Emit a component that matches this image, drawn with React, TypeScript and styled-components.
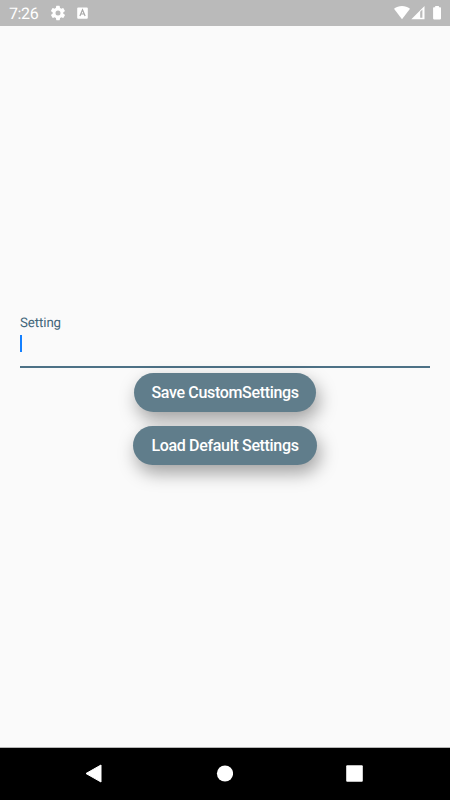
import React from "react";
import styled, { createGlobalStyle } from "styled-components";

const GlobalStyle = createGlobalStyle`
  * { box-sizing: border-box; }
  body { margin: 0; background: #fafafa; }
`;

const Screen = styled.div`
  display: flex;
  flex-direction: column;
  width: 450px;
  height: 800px;
  overflow: hidden;
  background: #fafafa;
  font-family: Roboto, sans-serif;
  text-rendering: geometricPrecision;
`;

const StatusBar = styled.header`
  display: flex;
  align-items: center;
  justify-content: space-between;
  flex: none;
  height: 26px;
  padding: 0 8px 0 9px;
  background: #bababa;
  color: #fff;
`;

const StatusGroup = styled.div`
  display: flex;
  align-items: center;
`;

const Clock = styled.span`
  width: 41px;
  padding-top: 2px;
  font-size: 16px;
  line-height: 20px;
  letter-spacing: -0.4px;
  white-space: nowrap;
`;

const Icon = styled.svg`
  display: block;
  flex: none;
`;

const Content = styled.main`
  display: flex;
  flex: 1;
  flex-direction: column;
  align-items: center;
  padding: 289px 20px 0;
`;

const Field = styled.label`
  display: flex;
  flex-direction: column;
  width: 100%;
  height: 52.5px;
  border-bottom: 2px solid #4d7186;
`;

const FieldLabel = styled.span`
  height: 19px;
  font-size: 13.3px;
  line-height: 17px;
  letter-spacing: -0.1px;
  color: #43677a;
`;

const Caret = styled.span`
  width: 2px;
  height: 17px;
  margin-top: 1px;
  background: #1480ff;
`;

const Actions = styled.div`
  display: flex;
  flex-direction: column;
  align-items: center;
  gap: 13.5px;
  padding-top: 5.7px;
`;

const PillButton = styled.button<{ $width: number }>`
  width: ${({ $width }) => $width}px;
  height: 39.3px;
  padding: 0;
  border: 0;
  border-radius: 20px;
  background: #607d8b;
  box-shadow: 3px 8px 18px rgba(0, 0, 0, 0.36);
  color: #fff;
  font-family: inherit;
  font-size: 16px;
  font-weight: 500;
  line-height: 20px;
  letter-spacing: -0.33px;
  white-space: nowrap;
`;

const NavBar = styled.nav`
  display: flex;
  align-items: center;
  justify-content: space-between;
  flex: none;
  height: 53px;
  padding: 0 87px 1px 85px;
  border-top: 1px solid #b5b5b5;
  background: #000;
`;

export default function App() {
  return (
    <>
      <GlobalStyle />
      <Screen>
        <StatusBar>
          <StatusGroup>
            <Clock>7:26</Clock>
            <Icon width="16" height="16" viewBox="0.8 0.8 22.4 22.4" fill="#fff">
              <path d="M19.4 13a7.5 7.5 0 0 0 0-2l2.1-1.6a.5.5 0 0 0 .1-.7l-2-3.4a.5.5 0 0 0-.6-.2l-2.5 1a7.7 7.7 0 0 0-1.7-1l-.4-2.7a.5.5 0 0 0-.5-.4h-4a.5.5 0 0 0-.5.4l-.4 2.7a7.7 7.7 0 0 0-1.7 1l-2.5-1a.5.5 0 0 0-.6.2l-2 3.4a.5.5 0 0 0 .1.7L4.5 11a8 8 0 0 0 0 2l-2.1 1.6a.5.5 0 0 0-.1.7l2 3.4c.1.2.4.3.6.2l2.5-1c.5.4 1.1.8 1.7 1l.4 2.7c0 .2.2.4.5.4h4c.2 0 .5-.2.5-.4l.4-2.7a7.7 7.7 0 0 0 1.7-1l2.5 1c.2.1.5 0 .6-.2l2-3.4a.5.5 0 0 0-.1-.7zM12 15.5a3.5 3.5 0 1 1 0-7 3.5 3.5 0 0 1 0 7z" />
            </Icon>
            <Icon width="27" height="16" viewBox="0 0 27 16">
              <rect x="11.2" y="2.5" width="10.6" height="11.3" rx="1" fill="#fff" />
              <path d="M13.9 11 16.5 4.8l2.6 6.2M15 9h3" fill="none" stroke="#a8a8a8" strokeWidth="1.2" />
            </Icon>
          </StatusGroup>
          <Icon width="48" height="16" viewBox="0 0 48 16">
            <path d="M0 3.8C4.7.2 11.3.2 16 3.8L8 14.2z" fill="#fff" />
            <path fillRule="evenodd" d="M30.5 1v13.2H17.3zM26.2 6.8v6h2.2v-8.2z" fill="#fff" />
            <path d="M41.2 1h3.7v1.3h1.3a.8.8 0 0 1 .8.8v10.5a.8.8 0 0 1-.8.8h-6.3a.8.8 0 0 1-.8-.8V3.1a.8.8 0 0 1 .8-.8h1.3z" fill="#fff" />
          </Icon>
        </StatusBar>
        <Content>
          <Field>
            <FieldLabel>Setting</FieldLabel>
            <Caret />
          </Field>
          <Actions>
            <PillButton $width={182.6}>Save CustomSettings</PillButton>
            <PillButton $width={184}>Load Default Settings</PillButton>
          </Actions>
        </Content>
        <NavBar>
          <Icon width="17" height="19" viewBox="0 0 17 19">
            <path d="M1 9.5 16 1v17z" fill="#fff" stroke="#fff" strokeWidth="1" strokeLinejoin="round" />
          </Icon>
          <Icon width="17" height="17" viewBox="0 0 17 17">
            <circle cx="9" cy="8.5" r="8.1" fill="#fff" />
          </Icon>
          <Icon width="17" height="17" viewBox="0 0 17 17">
            <rect x="0.2" y="0.3" width="16.6" height="16.5" rx="1" fill="#fff" />
          </Icon>
        </NavBar>
      </Screen>
    </>
  );
}
